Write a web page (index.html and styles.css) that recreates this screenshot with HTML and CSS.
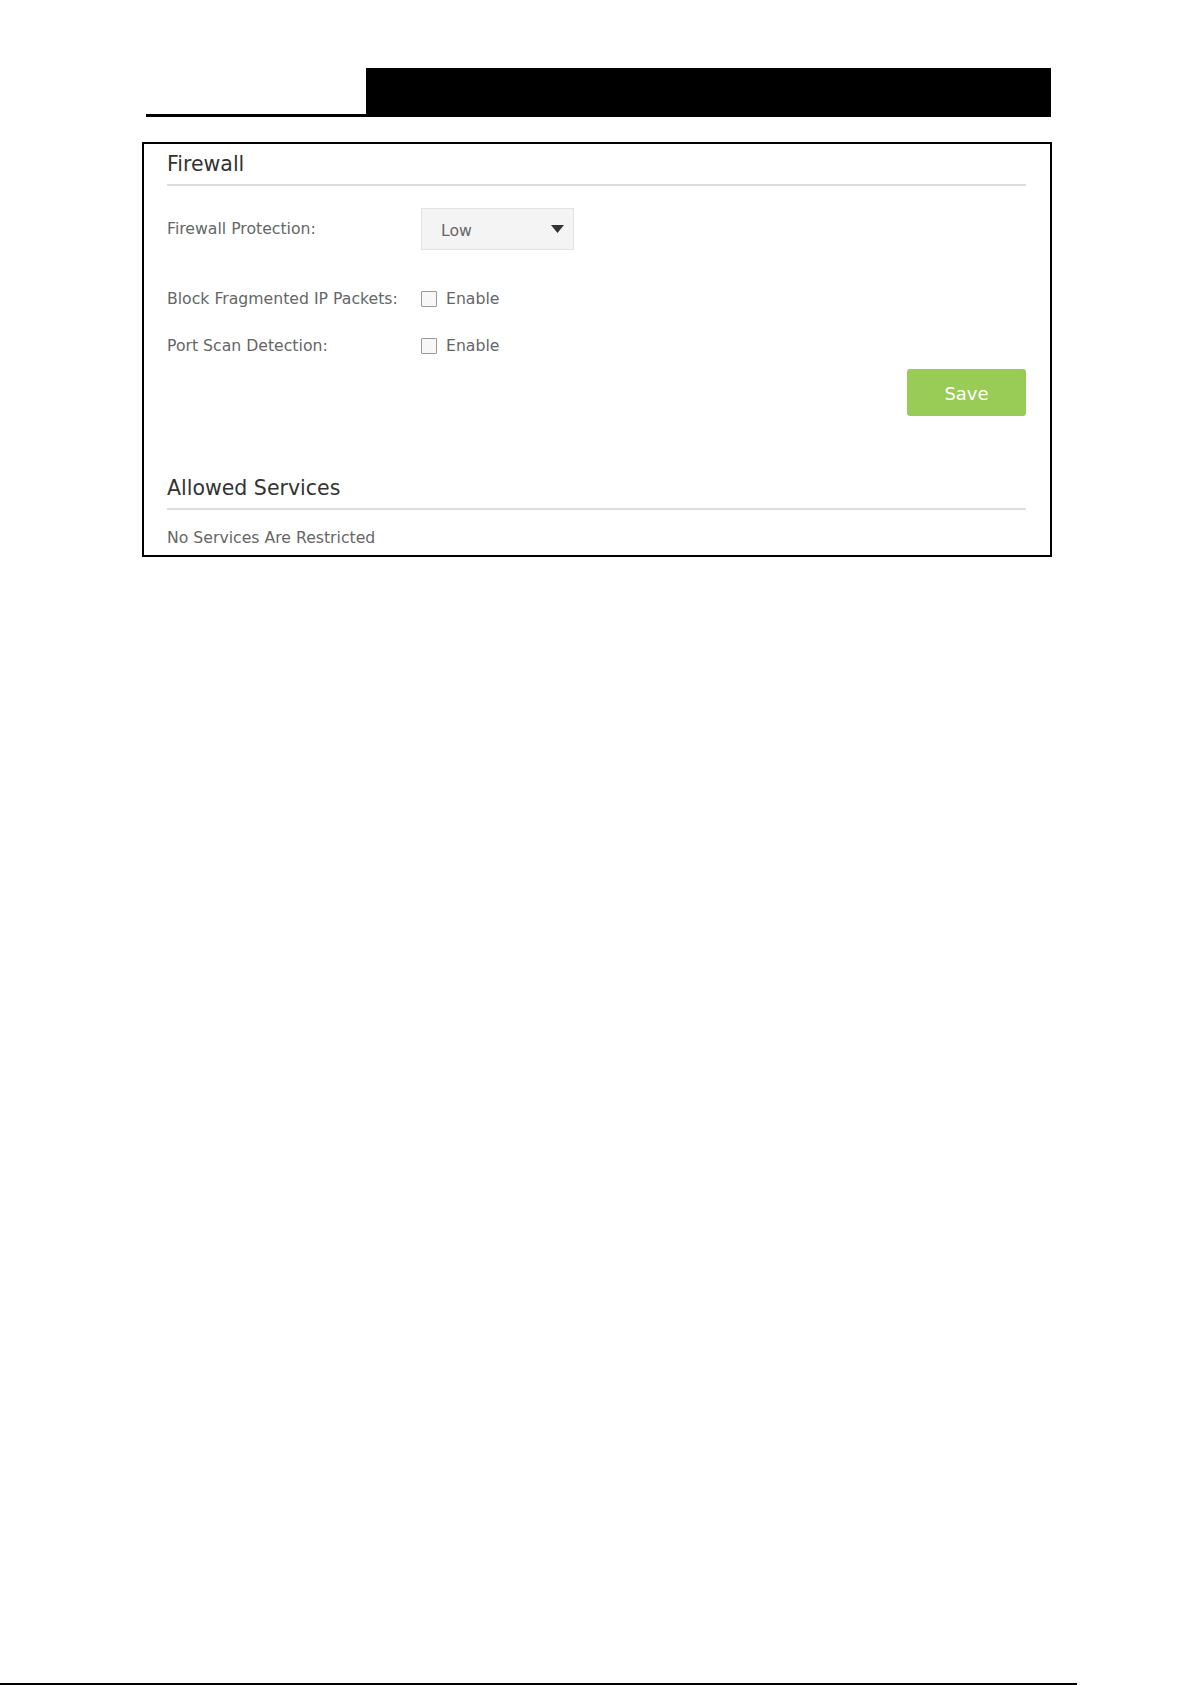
FILE: index.html
```html
<!DOCTYPE html>
<html lang="en">
<head>
    <meta charset="UTF-8">
    <meta name="viewport" content="width=device-width, initial-scale=1">
    <title>Firewall</title>
    <link rel="stylesheet" href="styles.css">
</head>
<body>
<div class="page">
    <div class="page-head">
        <div class="head-tab"></div>
        <div class="head-bar"></div>
    </div>

    <div class="panel">
        <h2 class="panel-title">Firewall</h2>

        <div class="row row-select">
            <label class="row-label">Firewall Protection:</label>
            <div class="select">
                <span>Low</span>
                <svg class="select-arrow" width="13" height="8" viewBox="0 0 13 8"><path d="M0 0 H13 L6.5 8 Z" fill="#333"/></svg>
            </div>
        </div>

        <div class="row row-first-check">
            <label class="row-label">Block Fragmented IP Packets:</label>
            <label class="check"><input type="checkbox"> Enable</label>
        </div>

        <div class="row row-check">
            <label class="row-label">Port Scan Detection:</label>
            <label class="check"><input type="checkbox"> Enable</label>
        </div>

        <div class="actions">
            <button type="button" class="btn-save">Save</button>
        </div>

        <h2 class="panel-title second">Allowed Services</h2>
        <p class="note">No Services Are Restricted</p>
    </div>

    <div class="page-foot"></div>
</div>
</body>
</html>
```

FILE: styles.css
```css
body {
    margin: 0;
    background-color: #fff;
    font-family: "DejaVu Sans", Verdana, sans-serif;
}
.page {
    min-height: 1685px;
    display: flex;
    flex-direction: column;
}
.page-head {
    display: flex;
    width: 905px;
    height: 49px;
    margin: 68px 0 0 146px;
}
.head-tab {
    width: 220px;
    border-bottom: 3px solid #000;
}
.head-bar {
    flex: 1;
    background-color: #000;
}
.panel {
    box-sizing: border-box;
    width: 910px;
    margin: 25px 0 0 142px;
    border: 2px solid #000;
    padding: 5px 24px 7px 23px;
}
.panel-title {
    margin: 0;
    font-size: 20.5px;
    font-weight: normal;
    line-height: 30px;
    color: #333;
    padding-bottom: 5px;
    border-bottom: 2px solid #ddd;
}
.panel-title.second {
    margin-top: 57px;
}
.row {
    display: flex;
    align-items: center;
}
.row-label {
    width: 254px;
    font-size: 15.7px;
    line-height: 20px;
    color: #666;
}
.row-select {
    margin-top: 22px;
    height: 42px;
}
.row-first-check {
    margin-top: 39px;
    height: 20px;
}
.row-check {
    margin-top: 27px;
    height: 20px;
}
.select {
    box-sizing: border-box;
    width: 153px;
    height: 42px;
    display: flex;
    align-items: center;
    justify-content: space-between;
    padding: 2px 9px 0 19px;
    background-color: #f4f4f4;
    border: 1px solid #e2e2e2;
    font-size: 15.7px;
    color: #666;
}
.select-arrow {
    margin-bottom: 2px;
}
.check {
    display: flex;
    align-items: center;
    gap: 9px;
    font-size: 15.7px;
    line-height: 20px;
    color: #666;
}
.check input {
    appearance: none;
    -webkit-appearance: none;
    margin: 0;
    width: 16px;
    height: 16px;
    border: 1px solid #999;
    border-radius: 1px;
    background-color: #f7f7f7;
}
.actions {
    display: flex;
    justify-content: flex-end;
    margin-top: 13px;
}
.btn-save {
    width: 119px;
    height: 47px;
    padding-top: 2px;
    border: none;
    border-radius: 3px;
    background-color: #99cc57;
    color: #fff;
    font-family: inherit;
    font-size: 18px;
    cursor: pointer;
}
.note {
    margin: 18px 0 0;
    font-size: 15.7px;
    line-height: 20px;
    color: #666;
}
.page-foot {
    margin-top: auto;
    width: 1077px;
    border-top: 2px solid #000;
}
```
